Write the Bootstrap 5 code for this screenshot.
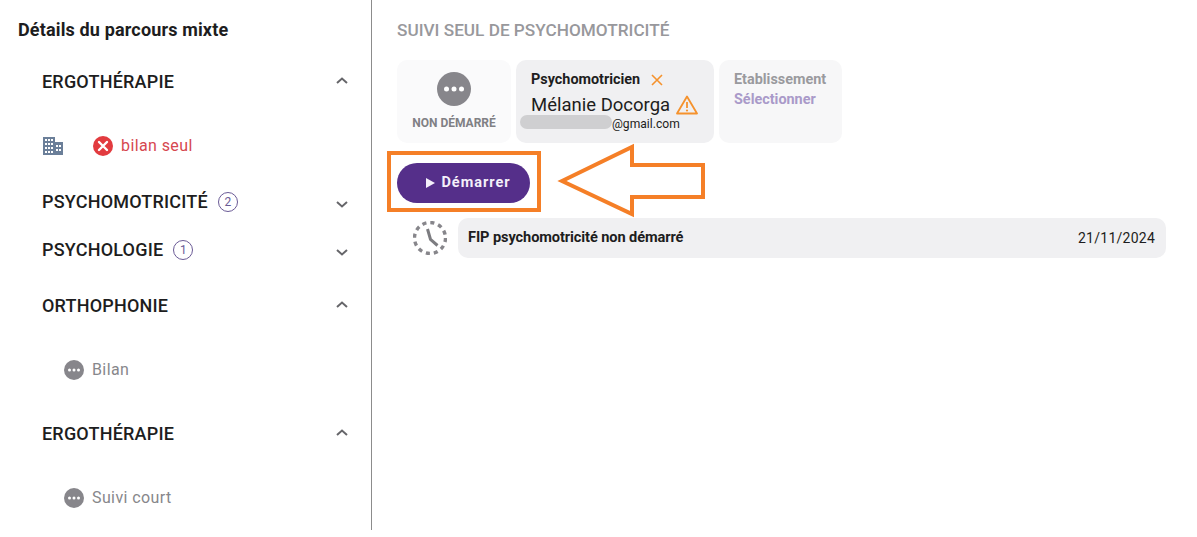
<!doctype html>
<html lang="fr">
<head>
<meta charset="utf-8">
<title>Parcours mixte</title>
<link href="https://cdn.jsdelivr.net/npm/bootstrap@5.3.0/dist/css/bootstrap.min.css" rel="stylesheet">
<style>
html,body{height:537px;overflow:hidden;background:#fff}
body{font-family:Roboto,"Liberation Sans",sans-serif;color:#1d1d20;position:relative}
.shell{height:530px}
.side{width:372px;border-right:1px solid #8c8c8c;flex:none}
.side-title{font-size:18px;font-weight:700;line-height:20px;padding:20px 0 0 18px;letter-spacing:.15px}
.sec{height:48px;padding:0 22px 0 42px;font-size:18px;font-weight:500;letter-spacing:.2px}
.gap-s{margin-top:4px}.gap-m{margin-top:8px}.gap-l{margin-top:12px}.gap-xl{margin-top:17px}
.cnt{width:20px;height:20px;border:1px solid #6a5a96;border-radius:50%;font-size:12px;font-weight:400;color:#6a5a96;margin:1px 0 0 10px;letter-spacing:0}
.chev{margin-left:auto;width:14px;height:9px;color:#66666a;flex:none}
.chev-up{margin-bottom:2px}
.chev-down{margin-top:6px}
.sub{font-size:16px;letter-spacing:.4px;height:56px;padding-top:2px}
.sub-red{color:#d6474f;padding-left:43px}
.sub-grey{color:#87878b;padding-left:64px}
.bad{margin:0 8px 0 30px;flex:none}
.dotc{width:20px;height:20px;border-radius:50%;background:#87868b;flex:none}
.main-col{padding:21px 31px 0 25px;position:relative}
.main-title{font-size:17.2px;font-weight:500;color:#98989c;line-height:19px}
.tiles{margin-top:20px;height:83px}
.tile{border-radius:10px;height:83px}
.t-status{width:114px;background:#fafafb;font-size:12px;font-weight:700;color:#808084}
.t-person{width:198px;background:#f0f0f2;margin-left:5px;padding:11px 0 0 15px;position:relative}
.t-place{width:123px;background:#f7f7f8;margin-left:5px;padding:10px 0 0 15px;font-size:14.4px;font-weight:700;line-height:20px;color:#9a9a9e}
.t-place span{color:#a99ac9;display:block}
.role{font-size:14.4px;font-weight:700;line-height:17px}
.role-x{margin-left:11px}
.who{font-size:18.5px;line-height:24px;margin-top:5px;letter-spacing:0}
.warn{margin-left:6px}
.mail{font-size:12.1px;line-height:14px;margin-top:0;padding-left:81px}
.blurbar{position:absolute;left:4px;top:55px;width:92px;height:14px;border-radius:7px;background:#cfcfd1}
.go{margin-top:20px;width:133px;height:40px;border-radius:20px;background:#552f8a;color:#f4f0fa;font-size:14.5px;font-weight:700;letter-spacing:1px;border:0;padding:0 0 0 10px;gap:6px}
.go:hover{background:#552f8a;color:#f4f0fa}
.tl{margin-top:15px;padding-left:16px}
.tl-box{margin-left:11px;height:40px;background:#f0f0f2;border-radius:10px;padding:0 11px 0 10px}
.tl-name{font-size:14.6px;font-weight:700;letter-spacing:-.1px}
.tl-date{font-size:14px;letter-spacing:.25px}
.mark-box{position:absolute;left:387px;top:151px;width:154px;height:61px;border:4px solid #f57f27;pointer-events:none}
.mark-arrow{position:absolute;left:555px;top:142px;pointer-events:none}
</style>
</head>
<body>
<div class="d-flex shell">
  <aside class="side">
    <div class="side-title">Détails du parcours mixte</div>
    <div class="sec gap-xl d-flex align-items-center">
      <span>ERGOTHÉRAPIE</span>
      <svg class="chev chev-up" viewBox="0 0 14 9"><path d="M2 7 L7 2.500 L12 7" fill="none" stroke="currentColor" stroke-width="2"/></svg>
    </div>
    <div class="sub sub-red gap-l d-flex align-items-center">
      <svg width="20" height="18" viewBox="0 0 20 18" class="flex-shrink-0"><path fill="#6b7f99" d="M0 0h12v5h8v13H0z"/><g fill="#fff"><rect x="2" y="2" width="2" height="2"/><rect x="5" y="2" width="2" height="2"/><rect x="8" y="2" width="2" height="2"/><rect x="2" y="6" width="2" height="2"/><rect x="5" y="6" width="2" height="2"/><rect x="8" y="6" width="2" height="2"/><rect x="13" y="8" width="2" height="2"/><rect x="16" y="8" width="2" height="2"/><rect x="2" y="10" width="2" height="2"/><rect x="5" y="10" width="2" height="2"/><rect x="8" y="10" width="2" height="2"/><rect x="13" y="12" width="2" height="2"/><rect x="16" y="12" width="2" height="2"/><rect x="2" y="14" width="2" height="2"/><rect x="5" y="14" width="2" height="2"/><rect x="8" y="14" width="2" height="2"/></g></svg>
      <svg width="20" height="20" viewBox="0 0 20 20" class="bad"><circle cx="10" cy="10" r="10" fill="#e23b3f"/><path d="M6 6l8 8M14 6l-8 8" stroke="#fff" stroke-width="2.400" stroke-linecap="round"/></svg>
      <span>bilan seul</span>
    </div>
    <div class="sec gap-s d-flex align-items-center">
      <span>PSYCHOMOTRICITÉ</span><span class="cnt d-flex align-items-center justify-content-center">2</span>
      <svg class="chev chev-down" viewBox="0 0 14 9"><path d="M2 2 L7 6.500 L12 2" fill="none" stroke="currentColor" stroke-width="2"/></svg>
    </div>
    <div class="sec d-flex align-items-center">
      <span>PSYCHOLOGIE</span><span class="cnt d-flex align-items-center justify-content-center">1</span>
      <svg class="chev chev-down" viewBox="0 0 14 9"><path d="M2 2 L7 6.500 L12 2" fill="none" stroke="currentColor" stroke-width="2"/></svg>
    </div>
    <div class="sec gap-m d-flex align-items-center">
      <span>ORTHOPHONIE</span>
      <svg class="chev chev-up" viewBox="0 0 14 9"><path d="M2 7 L7 2.500 L12 7" fill="none" stroke="currentColor" stroke-width="2"/></svg>
    </div>
    <div class="sub sub-grey gap-l d-flex align-items-center gap-2">
      <svg class="dotc" viewBox="0 0 20 20"><g fill="#fff"><circle cx="5.500" cy="10" r="1.500"/><circle cx="10" cy="10" r="1.500"/><circle cx="14.500" cy="10" r="1.500"/></g></svg>
      <span>Bilan</span>
    </div>
    <div class="sec gap-l d-flex align-items-center">
      <span>ERGOTHÉRAPIE</span>
      <svg class="chev chev-up" viewBox="0 0 14 9"><path d="M2 7 L7 2.500 L12 7" fill="none" stroke="currentColor" stroke-width="2"/></svg>
    </div>
    <div class="sub sub-grey gap-l d-flex align-items-center gap-2">
      <svg class="dotc" viewBox="0 0 20 20"><g fill="#fff"><circle cx="5.500" cy="10" r="1.500"/><circle cx="10" cy="10" r="1.500"/><circle cx="14.500" cy="10" r="1.500"/></g></svg>
      <span>Suivi court</span>
    </div>
  </aside>
  <main class="main-col flex-grow-1">
    <div class="main-title">SUIVI SEUL DE PSYCHOMOTRICITÉ</div>
    <div class="tiles d-flex">
      <div class="tile t-status d-flex flex-column align-items-center pt-2">
        <svg width="34" height="34" viewBox="0 0 34 34" class="mt-1"><circle cx="17" cy="17" r="17" fill="#87868b"/><g fill="#fff"><circle cx="9.500" cy="17" r="2.500"/><circle cx="17" cy="17" r="2.500"/><circle cx="24.500" cy="17" r="2.500"/></g></svg>
        <div class="mt-2">NON DÉMARRÉ</div>
      </div>
      <div class="tile t-person">
        <div class="role d-flex align-items-center">Psychomotricien
          <svg width="12" height="12" viewBox="0 0 12 12" class="role-x"><path d="M1 1l10 10M11 1L1 11" stroke="#f5922d" stroke-width="1.600"/></svg>
        </div>
        <div class="who d-flex align-items-center">Mélanie Docorga
          <svg width="22" height="20" viewBox="0 0 22 20" class="warn"><path d="M11 1.500 L21 18.500 H1 Z" fill="none" stroke="#f5922d" stroke-width="1.800" stroke-linejoin="round"/><path d="M11 7v6" stroke="#f5922d" stroke-width="1.800"/><circle cx="11" cy="15.500" r="1.100" fill="#f5922d"/></svg>
        </div>
        <div class="mail">@gmail.com</div>
        <div class="blurbar"></div>
      </div>
      <div class="tile t-place">Etablissement<span>Sélectionner</span></div>
    </div>
    <button type="button" class="btn go d-flex align-items-center justify-content-center">
      <svg width="9" height="10" viewBox="0 0 9 10"><path d="M0 0l9 5-9 5z" fill="#f4f0fa"/></svg>Démarrer
    </button>
    <div class="tl d-flex align-items-center">
      <svg width="34" height="34" viewBox="0 0 34 34" class="flex-shrink-0"><circle cx="17" cy="17" r="15.500" fill="none" stroke="#87868b" stroke-width="3.400" stroke-dasharray="4.100 4"/><path d="M14.500 8 L17.500 18.500 L24.500 24.500" fill="none" stroke="#7c7c80" stroke-width="3"/></svg>
      <div class="tl-box flex-grow-1 d-flex align-items-center justify-content-between">
        <span class="tl-name">FIP psychomotricité non démarré</span>
        <span class="tl-date">21/11/2024</span>
      </div>
    </div>
  </main>
</div>
<div class="mark-box"></div>
<svg class="mark-arrow" width="155" height="80" viewBox="0 0 155 80"><path d="M7 39 L77 5 L77 23 L148 23 L148 55 L77 55 L77 72 Z" fill="none" stroke="#f57f27" stroke-width="4"/></svg>
</body>
</html>
